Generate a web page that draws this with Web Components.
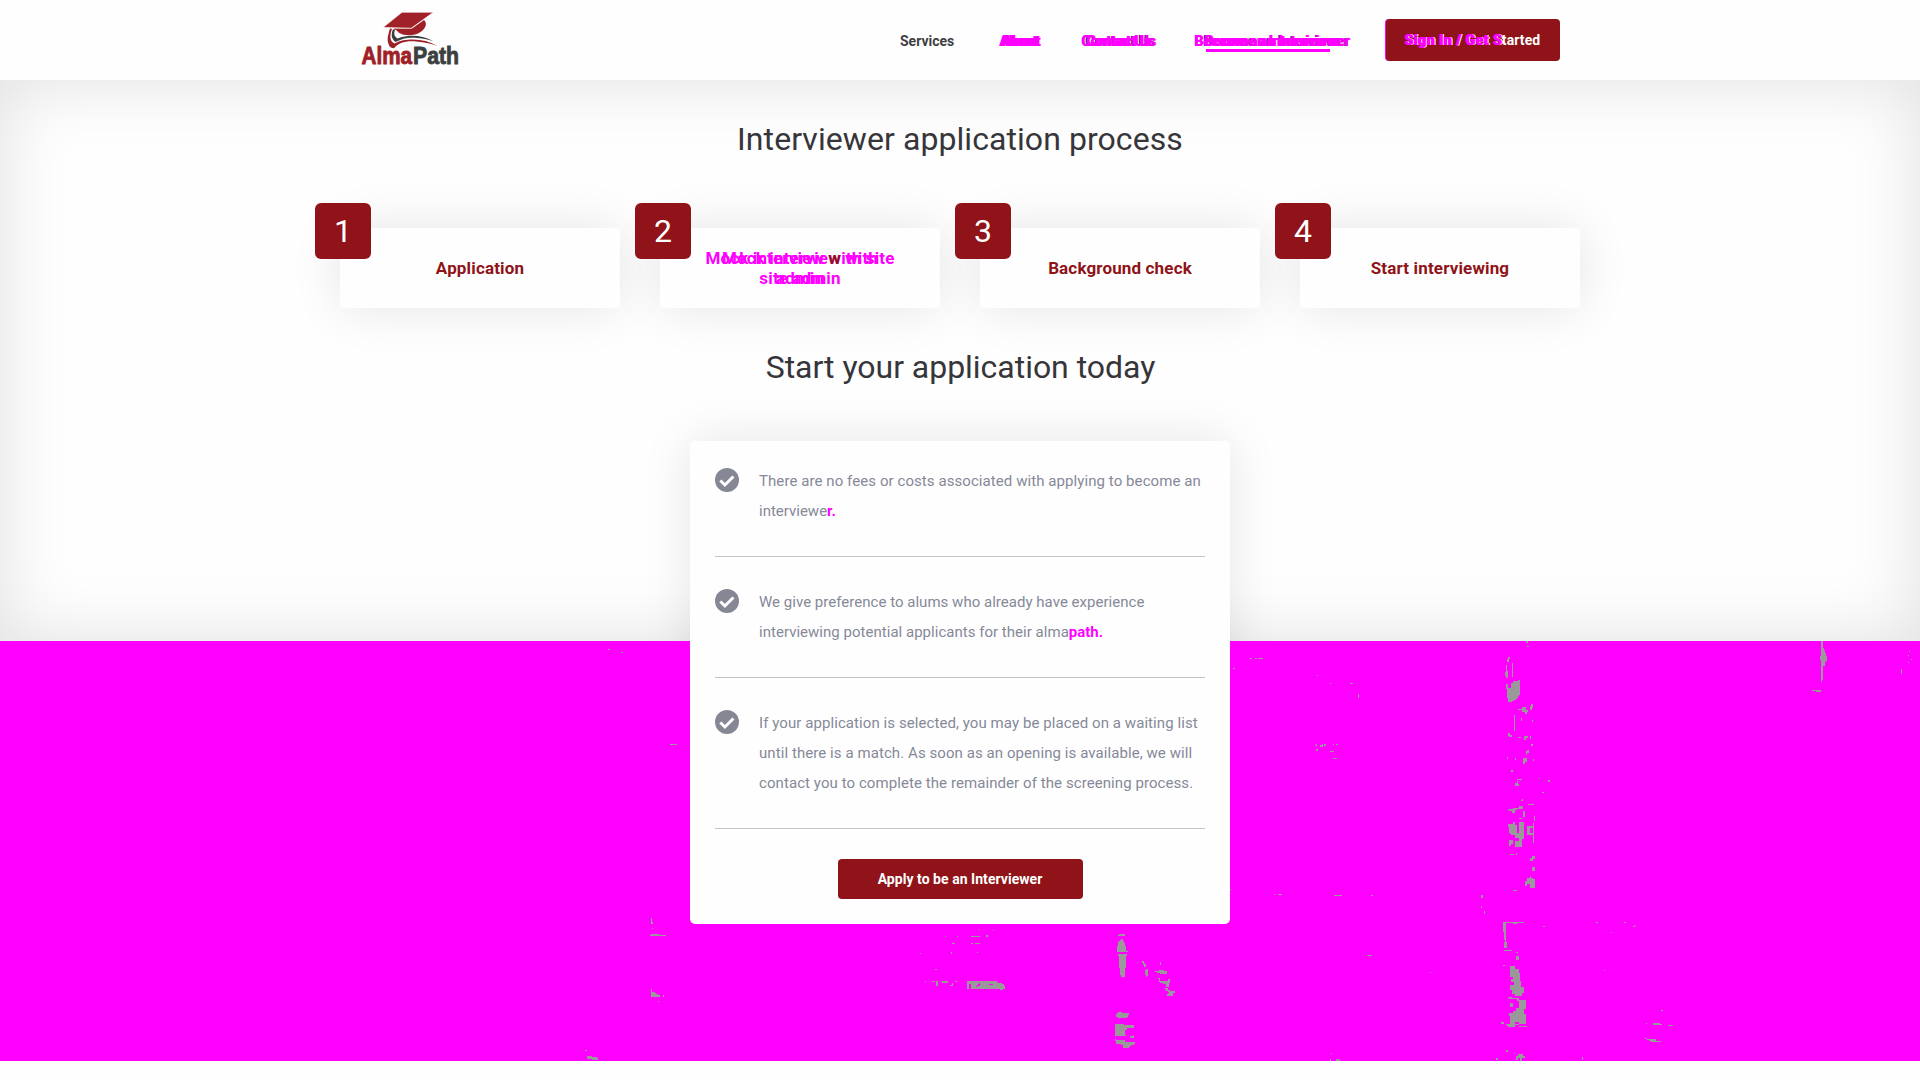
<!DOCTYPE html>
<html lang="en"><head><meta charset="utf-8"><title>AlmaPath</title>
<style>
body{margin:0;background:#fefefe;font-family:Roboto,"Liberation Sans",sans-serif;color:#36353a;overflow:hidden}
</style></head><body>
<alma-page></alma-page>
<script>
const define=(name,html)=>customElements.define(name,class extends HTMLElement{
  constructor(){super();this.attachShadow({mode:'open'}).innerHTML=html;}
});

define('alma-logo',`<style>:host{display:block;width:110px;height:66px}svg{display:block}</style>
<svg width="110" height="66" viewBox="0 0 110 66">
<path d="M30 18.300C28.500 24 26.500 29 28.500 34C29.500 37 31 38.300 34 38.300C38 33 46 30.500 56 31.500C65 32 72 34 77.700 36C69 31 60 29 50 29.500C43 30 39 31 34.500 33.500C29 31 30 24 32 19Z" fill="#9f2027"/>
<path d="M33 19.300C31 24 31 29 35.500 32C43 28 49 27 57 28C64 28.500 69 30 73.500 31.200C65 26.500 55 25 48 26C43 26.500 40 27.500 37.500 28.500C33.500 26 34 23 35 20Z" fill="#3b403f"/>
<path d="M34 18.500H52L64 10C68 13.500 65.500 20 58 23.500C53 25.800 44 26 39.500 23C37 21.500 37.500 20 34 19.500Z" fill="#9f2027"/>
<path d="M23 17.500L42 2.200H73.500L51.300 18.200Z" fill="#a02128" stroke="#fefefe" stroke-width=".7"/>
<g font-family="Liberation Sans,sans-serif" font-weight="700" font-size="24.500" stroke-width=".9"><text x="1.500" y="53.700" textLength="50.500" lengthAdjust="spacingAndGlyphs" fill="#9f2027" stroke="#9f2027">Alma</text><text x="53" y="53.700" textLength="46" lengthAdjust="spacingAndGlyphs" fill="#3b403f" stroke="#3b403f">Path</text></g>
</svg>`);

define('nav-link',`<style>
:host{display:block;font-size:14px;font-weight:700;line-height:20px;white-space:nowrap;color:#3f3e43}
:host([moved]){color:#f0f;letter-spacing:.05px;text-shadow:1px 0 #f0f,var(--shift,4px) 0 #f0f,calc(var(--shift,4px) - 1px) 0 #f0f,calc(var(--shift,4px) - 2px) 0 #3a393e}
:host([current]) span{display:block;position:relative}
:host([current]) span::after{content:"";position:absolute;left:12px;width:124px;top:18px;height:3px;background:#f0f}
</style><span><slot></slot></span>`);

define('site-header',`<style>
:host{display:block;height:80px;background:#fefefe}
.wrap{width:1200px;margin:0 auto;height:80px;display:flex;align-items:flex-start}
alma-logo{margin:10px 0 0}
nav{display:flex;margin:31px 0 0 auto}
nav nav-link{box-sizing:border-box}
.btn{box-sizing:border-box;width:175px;height:42px;margin:19px 0 0;border-radius:4px;background:#8f1318;border-left:1px solid #f0f;color:#fff;font-size:14px;font-weight:700;line-height:42px;padding-left:18px;white-space:nowrap;letter-spacing:.1px}
.btn b{color:#f0f;letter-spacing:.5px;text-shadow:1px 0 #f0f,2px 0 #fff}
</style><div class="wrap"><alma-logo></alma-logo>
<nav><nav-link style="width:99px">Services</nav-link><nav-link moved style="width:82px">About</nav-link><nav-link moved style="width:113px;--shift:6px">Contact Us</nav-link><nav-link moved current style="width:191px;--shift:11px">Become an Interviewer</nav-link></nav>
<div class="btn"><b>Sign In / Get S</b>tarted</div></div>`);

define('step-card',`<style>
:host{display:flex;position:relative;box-sizing:border-box;width:280px;height:80px;background:#fefefe;border-radius:4px;box-shadow:0 0 50px rgba(0,0,0,.1);align-items:center;justify-content:center;text-align:center;color:#8f1318;font-size:17px;font-weight:700;line-height:20px;letter-spacing:.15px}
.n{position:absolute;left:-25px;top:-25px;width:56px;height:56px;line-height:56px;border-radius:6px;background:#8f1318;color:#fff;font-size:32px;font-weight:400;letter-spacing:0}
:host([moved]){color:#f0f}
.t{position:relative}
:host([moved]) .t::after{content:"Mock interview with site\\a admin";white-space:pre;position:absolute;left:50%;top:0;transform:translateX(-50%);color:#f0f}
::slotted(i){font-style:normal;color:#8f1318;position:relative;z-index:1}
</style><div class="n"><slot name="number"></slot></div><div class="t"><slot></slot></div>`);

define('check-item',`<style>
:host{display:flex;padding:0 0 30px;margin-bottom:30px;border-bottom:1px solid #c6c6c8;color:#868998;font-size:15px;line-height:30px;white-space:nowrap}
svg{flex:none;margin:2px 20px 0 0}
</style><svg width="24" height="24" viewBox="0 0 24 24"><circle cx="12" cy="12" r="12" fill="#858894"/><path d="M5.300 12.500L9.900 17L18.400 8.500" fill="none" stroke="#fff" stroke-width="3"/></svg><div><slot></slot></div>`);

define('apply-card',`<style>
:host{display:flex;flex-direction:column;position:relative;z-index:2;box-sizing:border-box;width:540px;height:483px;padding:25px;background:#fefefe;border-radius:5px}
:host::before{content:"";position:absolute;inset:0;z-index:-1;border-radius:5px;box-shadow:0 0 50px rgba(0,0,0,.1);clip-path:inset(-60px -60px 283px -60px)}
.btn{align-self:center;width:245px;height:40px;line-height:40px;border-radius:4px;background:#8f1318;color:#fff;text-align:center;font-size:14px;font-weight:700;letter-spacing:.04px}
b{color:#f0f;font-weight:700}
.w{letter-spacing:.075px}.s{letter-spacing:.024px}
</style>
<check-item><span class="w">There are no fees or costs associated with applying to become an</span><br>interviewe<b>r.</b></check-item>
<check-item><span class="s">We give preference to alums who already have experience<br>interviewing potential applicants for their alma</span><b>path.</b></check-item>
<check-item><span class="w">If your application is selected, you may be placed on a waiting list<br>until there is a match. As soon as an opening is available, we will<br>contact you to complete the remainder of the screening process.</span></check-item>
<div class="btn">Apply to be an Interviewer</div>`);

define('process-section',`<style>
:host{display:flex;flex-direction:column;align-items:center;height:561px;box-shadow:inset 0 0 70px rgba(0,0,0,.12)}
h2{margin:0;font-size:32px;font-weight:400;line-height:40px;color:#36353a}
.steps{display:flex;gap:40px;margin:69px 0 39px}
apply-card{margin-top:54px;flex:none}
</style>
<h2 style="margin-top:39px;letter-spacing:.07px">Interviewer application process</h2>
<div class="steps">
<step-card><span slot="number">1</span>Application</step-card>
<step-card moved><span slot="number">2</span>Mock intervie<i>w</i> with<br>site admin</step-card>
<step-card><span slot="number">3</span>Background check</step-card>
<step-card><span slot="number">4</span>Start interviewing</step-card></div>
<h2 style="letter-spacing:-.03px;padding-left:1px">Start your application today</h2>
<apply-card></apply-card>`);

define('photo-band',`<style>:host{display:block;height:420px;background:#f0f}svg{display:block}</style>
<svg width="1920" height="420" viewBox="0 641 1920 420" fill="#999" shape-rendering="crispEdges">
<g transform="translate(1480 630) scale(.33333)">
<path d="M138 33h6v6h-6zM141 48h6v3h-6zM84 81h6v6h-3v9h-6v-9h3zM78 105h3v18h3v21h-6v-6h-3v-12h3zM96 99h3v42h-3z"/>
<path d="M78 162h6v12h9v-15h6v-6h15v-3h6v45l-6 6l-3 6l-12 6l-6 3h-9z"/>
<path d="M114 237h12v-6h12v9h6v6h-3v6h-6v-6h-9v-6h-12zM150 228h3v-6h6v12h-3v6h-6zM102 255h3v48h-3zM123 264h3v9h-3zM156 270h3v6h-3zM84 309h6v6h6v6h-9v-3h-3zM114 321h9v3h-9zM132 318h12v6h-6v6h-6zM150 318h3v9h-3zM153 342h6v5h-6zM147 360v9h-6v6h-3v-12zM81 381h3v6h-3zM105 384h3v6h-3zM129 384h12v12h-6v6h-6zM159 387h3v6h-3zM93 421h6v6h-6zM111 447h15v3h-15zM105 460h6v-6h3v9h3v6h-12zM168 447h9v-3h3v4h-12zM204 450h6v6h-6zM186 486h6v4h-6zM126 507h3v6h-6v-3h3z"/>
<path d="M84 537h15v-3h18v-6h12v9h-18v3h-6v9h-9v-6h-9zM144 523h18v3h-18zM129 543h5v18h-5zM117 564h9v3h-9zM161 558h4v15h-4zM84 582h15v-6h6v9h6v24h6v-33h15v51h-6v24h-21v-18h12v-9h-12v-9h-12l-6-9v-15h-3zM87 630h12v12h-6v6h-6zM141 588h18v6h-9v15h9v6h-18zM159 579h4v60h-4zM90 672h12v3h-12zM108 669h3v6h-3zM150 684h6v-6h9v9h-6v6h-9zM156 711h9v12h-9zM135 753h6v-9h9v-6h3v6h6v3h6v27h-15v-12h-9v6h-6zM99 780h12v3h-12zM3 795h6v9h-6zM3 828h3v6h-3zM12 843h3v9h-3z"/>
<path d="M63 876h69v3h-20v3h-13v-3h-20l-1 56h3v18h-9v-18h2l-5-40v-19h-6zM72 961h24v3h-24zM108 966h6v3h-6zM108 978h8v12h-8zM63 1006h6v3h36v9h12v12h3v24h3v18h9v18h-6v9h-21v-6h-9v-12h-6v-15h12v-9h-9v-9h6v-6h-9v-33h-15v-3h-6zM84 1101h12v3h21v6h21v27h-6v15h6v30h-21v-6h-12v6h-15v-24h-4v-9h12v-6h9v-9h9v-21h-6v-6h-18l-8-3zM90 1119h9v12h-9zM63 1177h9v5h-9zM78 1182h39v3h-12v6h-18l-9-6zM117 1188h24v4h-24zM78 1260h6v5h-6zM102 1268h3v5h-3zM108 1278h6v-6h15v6h6v6h-9v9h-6v-9h-6v6h-6zM48 1284h6v6h-6zM189 888h6v4h-6z"/></g>
<g transform="translate(560 900) scale(.40816 .33333)">
<path d="M223 54h2v10l4 7h-6zM225 84h3v3h-3zM220 105h4v-3h18v3h18v3h-40zM223 267h2v9h8v4l11 5v6h-21zM252 285h3v6h-3zM240 303h3v3h-3zM61 450h5v3h-5zM66 468h10l4 3h8l5 4v5h-12l-4-3h-9l-3-4zM943 107h3v3h-3zM973 107h3v3h-3zM1007 107h22v4h-22zM1044 106h4v4h-4zM1060 90h3v3h-3zM1027 87h2v3h-2zM960 129h8v3h-8zM1007 129h6v3h-6zM1017 129h12v3h-12zM882 159h2v3h-2zM958 156h2v5h-2zM1022 156h2v3h-2zM919 207h5v3h-5zM894 243h3v3h-3zM911 243h8v3h-8zM921 243h4v15h-4zM931 243h20v6h-15zM960 248h3v9h-8v-3h5zM968 243h5v3h-5z"/>
<path fill-rule="evenodd" d="M997 243h71l7 6h7v3h5l3 9v6l-7 3l-8-3h-78zM1002 252v15h5v-15zM1019 261l10-12v7zM1048 252h14l-6 5z"/>
<path d="M1367 105l5-3h9l4 3v3h-18zM1376 117h3l7 21v15h5v3h-26v-12l4-20zM1367 162h22v6h-2v36h-3v27h-10l-4-33v-30h-3zM1414 186h3v3h-3zM1426 183h4l2 6l4 3v9h-4l-4-9zM1435 208h6v21h-3v6l-5-15zM1470 186h2v9h-2zM1458 212h10v-3h12v5h6v8h-14l-14-7zM1465 234h5v8h20v-5h4v12h-3v12h-6v-7l-15-6zM1480 264h10v5l8 4h8v6h-4v9h-14v-6l5-3l-8-8zM1362 345l6-9h10v4h15v6l-5 8h-21v-4h-5zM1360 372h22v3h24v8h-16v8h-5v12l5 6h-30zM1396 408h8v-3h2v9h-10zM1360 417h3v4h22v4h24v7l-10 4l-7 8h-12v-8l-10-5h-8z"/></g>
<g transform="translate(1220 630) scale(.44643 .33333)">
<path d="M1346 33h5v19l6 18v9h3v15l-4 1v14h-5v39l-4 8h-1v-60l-2-15l2-6zM1326 180h20v5h-8l-12-2zM1525 117h3v15h-3zM1543 63h3v3h-3zM1540 75h3v3h-3zM1547 87h3v3h-3zM1540 96h3v3h-3zM67 84h5v3h-5zM78 84h4v3h-4zM86 84h10v3h-10zM22 117h6v-3h6v3zM217 135h3v3h-3zM246 159h3v3h-3zM289 162l6-4h3v4zM309 192h2v12h-2zM213 348l4-9v9zM225 345h4v-3h2v8h-6zM234 342h3v5h-3zM253 342h3v3h-3zM260 342h4v3h-4zM215 357h4v5h-4zM240 366h6v-3h9v3zM253 384h10v3h-10zM22 777h3v3h-3zM120 792h3v3h-3zM131 792h8v3h-8zM255 795h18v3h-18zM336 798l7-4v4zM329 975h11v3h-11zM470 1026h3v3h-3zM724 888h4v4h-4zM843 876h4v3h-4zM906 876h3v3h-3zM875 906h3v3h-3zM922 891l9-6v4zM860 1020h2v3h-2zM988 1140h4v3h-4zM970 1180h15v3h5v3h-20zM1004 1185h11v3h-11zM954 1179h3v3h-3zM950 1224h7v3h19v5h12v4h-20l-12-7zM810 1281h3v9h-3zM246 1287h3v6h-3zM260 1287h8v6h-8zM249 1269h2v3h-2z"/></g>
<path d="M670 744h7v1h-7zM608 649h2v1h-2zM621 652h2v1h-2z"/>
</svg>`);

define('alma-page',`<style>:host{display:flex;flex-direction:column;width:1920px;height:1080px;overflow:hidden;background:#fefefe}site-header,process-section,photo-band{flex:none}</style>
<site-header></site-header><process-section></process-section><photo-band></photo-band>`);
</script></body></html>
